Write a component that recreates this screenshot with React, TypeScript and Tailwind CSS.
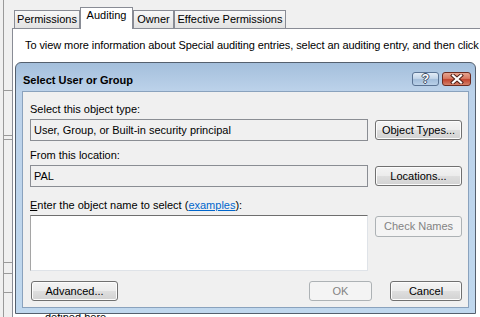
import React from "react";

const btn =
  "flex items-center justify-center rounded-[3px] border border-[#707070] bg-[linear-gradient(to_bottom,#f4f4f4_0%,#ececec_48%,#dedede_52%,#d2d2d2_100%)] shadow-[inset_0_0_0_1px_#fcfcfc] text-black";
const btnOff =
  "flex items-center justify-center rounded-[3px] border border-[#adb2b5] bg-[#f4f4f4] text-[#838383]";

function Tab({ label, w, active }: { label: string; w: string; active?: boolean }) {
  if (active) {
    return (
      <div
        className={`${w} h-[22px] -mb-px relative z-10 flex justify-center pt-[1px] border border-b-0 border-[#898c95] bg-white`}
      >
        <span className="leading-[13px]">{label}</span>
      </div>
    );
  }
  return (
    <div
      className={`${w} h-[18px] flex items-center justify-center border border-b-0 border-[#898c95] bg-[linear-gradient(to_bottom,#f8f8f8,#e2e2e2)]`}
    >
      <span className="leading-[13px]">{label}</span>
    </div>
  );
}

function Dialog() {
  return (
    <div className="absolute left-[15px] top-[62px] w-[461px] h-[252px] rounded-t-[6px] border border-[#55606e] bg-[linear-gradient(to_bottom,#a4bfdc_0px,#bcd2ea_28px,#c0d8ee_100%)] flex flex-col">
      {/* title bar */}
      <div className="h-[28px] shrink-0 flex items-start pl-[7px] pr-[4px]">
        <span className="mt-[11px] font-bold text-[11px] leading-[13px] text-black">Select User or Group</span>
        <div className="ml-auto mt-[9px] flex gap-[3px]">
          <div className="w-[27px] h-[14px] rounded-[3px] border border-[#5a7393] bg-[linear-gradient(to_bottom,#e2ecf6_0%,#c3d5e9_45%,#a3bedb_55%,#b9d0e8_100%)] flex items-center justify-center">
            <span className="text-white font-bold text-[12px] leading-[12px] [text-shadow:1px_0_#3b4d63,-1px_0_#3b4d63,0_1px_#3b4d63,0_-1px_#3b4d63]">
              ?
            </span>
          </div>
          <div className="w-[29px] h-[14px] rounded-[3px] border border-[#6b2b20] bg-[linear-gradient(to_bottom,#e6a590_0%,#d87a62_45%,#c2452f_55%,#d4816a_100%)] flex items-center justify-center">
            <svg width="14" height="10" viewBox="0 0 14 10">
              <path d="M3 1.5 L11 8.5 M11 1.5 L3 8.5" stroke="#4a1d16" strokeWidth="4" strokeLinecap="square" />
              <path d="M3 1.5 L11 8.5 M11 1.5 L3 8.5" stroke="#ffffff" strokeWidth="2.2" strokeLinecap="square" />
            </svg>
          </div>
        </div>
      </div>

      {/* body */}
      <div className="flex-1 mx-[6px] mb-[5px] border border-[#8aa2bd] bg-[#f0f0f0] flex flex-col pl-[7px] pr-[6px] pt-[11px]">
        <div className="h-[13px] leading-[13px]">Select this object type:</div>
        <div className="mt-[3px] flex items-center gap-[7px]">
          <div className="flex-1 h-[22px] border border-[#8a8d93] bg-[#f0f0f0] flex items-center pl-[3px]">
            User, Group, or Built-in security principal
          </div>
          <div className={`${btn} w-[87px] h-[20px]`}>Object Types...</div>
        </div>

        <div className="mt-[8px] h-[13px] leading-[13px]">From this location:</div>
        <div className="mt-[3px] flex items-center gap-[7px]">
          <div className="flex-1 h-[22px] border border-[#8a8d93] bg-[#f0f0f0] flex items-center pl-[3px]">
            PAL
          </div>
          <div className={`${btn} w-[87px] h-[20px]`}>Locations...</div>
        </div>

        <div className="mt-[12px] h-[13px] leading-[13px]">
          <span className="underline">E</span>nter the object name to select (
          <span className="text-[#0066cc] underline">examples</span>):
        </div>
        <div className="mt-[3px] flex items-start gap-[7px]">
          <div className="flex-1 h-[56px] bg-white border-t border-t-[#6e6e6e] border-l border-l-[#a5a5a5] border-r border-r-[#dfe3e8] border-b border-b-[#dfe3e8]" />
          <div className={`${btnOff} w-[87px] h-[21px] mt-px`}>Check Names</div>
        </div>

        <div className="mt-[10px] flex items-center">
          <div className={`${btn} w-[87px] h-[20px] ml-px`}>Advanced...</div>
          <div className={`${btnOff} w-[63px] h-[20px] ml-auto`}>OK</div>
          <div className={`${btn} w-[72px] h-[20px] ml-[18px] border-[#3c3c3c]`}>Cancel</div>
        </div>
      </div>
    </div>
  );
}

export default function App() {
  return (
    <div
      className="relative w-[480px] h-[317px] overflow-hidden bg-[#f0f0f0] flex text-[11px] text-black"
      style={{ fontFamily: '"Liberation Sans", Arial, sans-serif' }}
    >
      <div className="w-[3px] shrink-0" />
      <div className="w-px shrink-0 bg-[#9a9a9a]" />
      <div className="flex-1 min-w-0 flex flex-col">
        {/* tab strip */}
        <div className="h-[28px] shrink-0 flex items-end pl-[10px]">
          <Tab label="Permissions" w="w-[66px]" />
          <Tab label="Auditing" w="w-[53px]" active />
          <Tab label="Owner" w="w-[41px]" />
          <Tab label="Effective Permissions" w="w-[112px]" />
        </div>

        <div className="flex-1 min-h-0 flex overflow-hidden">
          {/* strip behind, left of the panel */}
          <div className="w-[8px] shrink-0 flex flex-col">
            <div className="mt-[62px] h-px bg-[#9a9a9a]" />
            <div className="mt-[44px] h-px bg-[#9a9a9a]" />
            <div className="mt-[3px] h-px bg-[#9a9a9a]" />
            <div className="mt-[122px] h-px bg-[#9a9a9a]" />
            <div className="mt-[10px] h-px bg-[#9a9a9a]" />
            <div className="mt-[18px] h-px bg-[#9a9a9a]" />
          </div>

          <div className="flex-1 min-w-0 border-l border-t border-[#898c95] bg-white pl-[12px] pt-[10px] flex flex-col overflow-hidden">
            <div className="h-[13px] shrink-0 leading-[13px] whitespace-nowrap tracking-[-0.08px]">
              To view more information about Special auditing entries, select an auditing entry, and then click Edit.
            </div>
            <div className="mt-[259px] ml-[20px] h-[13px] shrink-0 leading-[13px] whitespace-nowrap">defined here.</div>
          </div>
        </div>
      </div>

      <Dialog />
    </div>
  );
}
